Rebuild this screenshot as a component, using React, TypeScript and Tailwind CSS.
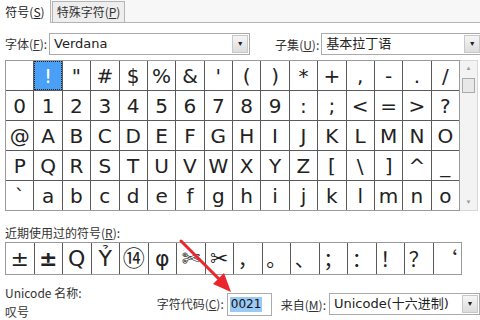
import { ReactNode } from "react";

const rows = [
  [" ", "!", "\"", "#", "$", "%", "&", "'", "(", ")", "*", "+", ",", "-", ".", "/"],
  ["0", "1", "2", "3", "4", "5", "6", "7", "8", "9", ":", ";", "<", "=", ">", "?"],
  ["@", "A", "B", "C", "D", "E", "F", "G", "H", "I", "J", "K", "L", "M", "N", "O"],
  ["P", "Q", "R", "S", "T", "U", "V", "W", "X", "Y", "Z", "[", "\\", "]", "^", "_"],
  ["`", "a", "b", "c", "d", "e", "f", "g", "h", "i", "j", "k", "l", "m", "n", "o"],
];

const recent = ["±", "±", "Q", "Ỷ", "⑭", "φ", "✄", "✂", "，", "。", "、", "；", "：", "！", "？", "‘"];

const cjk = { fontFamily: '"Noto Sans CJK SC", "Liberation Sans", sans-serif' };
const sym = { fontFamily: '"DejaVu Sans", "Noto Sans CJK SC", sans-serif' };

function Label({ text, k }: { text: string; k: string }) {
  return (
    <span className="text-[12px] leading-[16px] text-[#333] whitespace-nowrap" style={cjk}>
      {text}(<span className="underline">{k}</span>):
    </span>
  );
}

function Select({ value, w }: { value: string; w: string }) {
  return (
    <div className={`flex h-[22px] ${w} border border-[#ababab] bg-white`}>
      <div className="flex-1 flex items-center pl-1 text-[13px] leading-[16px] text-[#222]" style={sym}>
        {value}
      </div>
      <div className="w-[16px] m-px flex items-center justify-center border border-[#c8c8c8] bg-gradient-to-b from-[#f6f6f6] to-[#dcdcdc] text-[7px] text-[#222]">
        ▼
      </div>
    </div>
  );
}

function Cell({ children, sel }: { children: ReactNode; sel?: boolean }) {
  return (
    <div
      className={`flex items-center justify-center h-[29px] text-[20px] leading-none ${
        sel ? "bg-[#4aa0f6] text-white outline-1 outline-dotted outline-[#222] -outline-offset-1" : "bg-white text-[#222]"
      }`}
      style={sym}
    >
      {children}
    </div>
  );
}

export default function App() {
  return (
    <div className="relative w-[480px] h-[320px] bg-white overflow-hidden">
      {/* tabs */}
      <div className="flex items-end h-[23px] bg-[#f7f7f7] border-b border-[#b4b4b4]">
        <div className="h-[23px] w-[51px] -mb-px flex items-center justify-center bg-white border-r border-[#b4b4b4]">
          <span className="text-[12px] leading-[16px] text-[#222]" style={cjk}>
            符号(<span className="underline">S</span>)
          </span>
        </div>
        <div className="h-[21px] w-[73px] ml-px flex items-center justify-center bg-[#eeeeee] border border-b-0 border-[#b4b4b4]">
          <span className="text-[12px] leading-[16px] text-[#333]" style={cjk}>
            特殊字符(<span className="underline">P</span>)
          </span>
        </div>
      </div>

      {/* font row */}
      <div className="flex items-center h-[22px] mt-[10px] pl-[5px]">
        <Label text="字体" k="F" />
        <div className="ml-[2px]">
          <Select value="Verdana" w="w-[201px]" />
        </div>
        <div className="ml-[25px]">
          <Label text="子集" k="U" />
        </div>
        <div className="ml-[2px]">
          <Select value="基本拉丁语" w="w-[161px]" />
        </div>
      </div>

      {/* grid + scrollbar */}
      <div className="flex mt-[5px] ml-[5px]">
        <div className="w-[455px] border border-[#9a9a9a] bg-[#5a5a5a] grid grid-cols-16 gap-px">
          {rows.flat().map((c, i) => (
            <Cell key={i} sel={i === 1}>
              {c}
            </Cell>
          ))}
        </div>
        <div className="w-[18px] flex flex-col items-center bg-[#f3f3f3] border-y border-r border-[#d8d8d8]">
          <div className="h-[15px] text-[6px] text-[#999] flex items-center">▲</div>
          <div className="w-[13px] h-[15px] mt-[2px] bg-[#e8e8e8] border border-[#aaa]" />
          <div className="flex-1" />
          <div className="h-[15px] text-[6px] text-[#999] flex items-center">▼</div>
        </div>
      </div>

      {/* recent */}
      <div className="h-[16px] mt-[14px] pl-[5px] flex items-center">
        <Label text="近期使用过的符号" k="R" />
      </div>
      <div className="mt-[1px] ml-[5px] w-[457px] border border-[#9a9a9a] bg-[#5a5a5a] grid grid-cols-16 gap-px">
        {recent.map((c, i) => (
          <div
            key={i}
            className={`flex items-center justify-center h-[31px] bg-white text-[#222] leading-none ${
              i < 8 ? "text-[22px]" : "text-[20px]"
            } ${i === 1 ? "font-bold" : ""}`}
            style={i < 8 ? sym : cjk}
          >
            {c}
          </div>
        ))}
      </div>

      {/* bottom */}
      <div className="flex items-start mt-[9px] pl-[5px]">
        <div className="flex flex-col w-[157px] text-[12px] text-[#333]" style={cjk}>
          <span className="h-[18px] leading-[18px]">Unicode 名称:</span>
          <span className="h-[16px] leading-[16px] mt-[2px]">叹号</span>
        </div>
        <div className="flex items-center mt-[8px]">
          <Label text="字符代码" k="C" />
          <div className="ml-[3px] w-[45px] h-[23px] border border-[#ababab] bg-white flex items-center pl-[2px]">
            <span className="bg-[#99c9f5] text-[12px] text-[#111] px-px leading-[15px]" style={sym}>
              0021
            </span>
          </div>
          <div className="ml-[9px]">
            <Label text="来自" k="M" />
          </div>
          <div className="ml-[3px]">
            <Select value="Unicode(十六进制)" w="w-[151px]" />
          </div>
        </div>
      </div>

      {/* red arrow */}
      <svg className="absolute left-0 top-0 pointer-events-none" width="480" height="320">
        <line x1="181" y1="241" x2="222" y2="282" stroke="#e8262b" strokeWidth="3" strokeLinecap="round" />
        <polygon points="231,292 213,284 224,273" fill="#e8262b" />
      </svg>
    </div>
  );
}
